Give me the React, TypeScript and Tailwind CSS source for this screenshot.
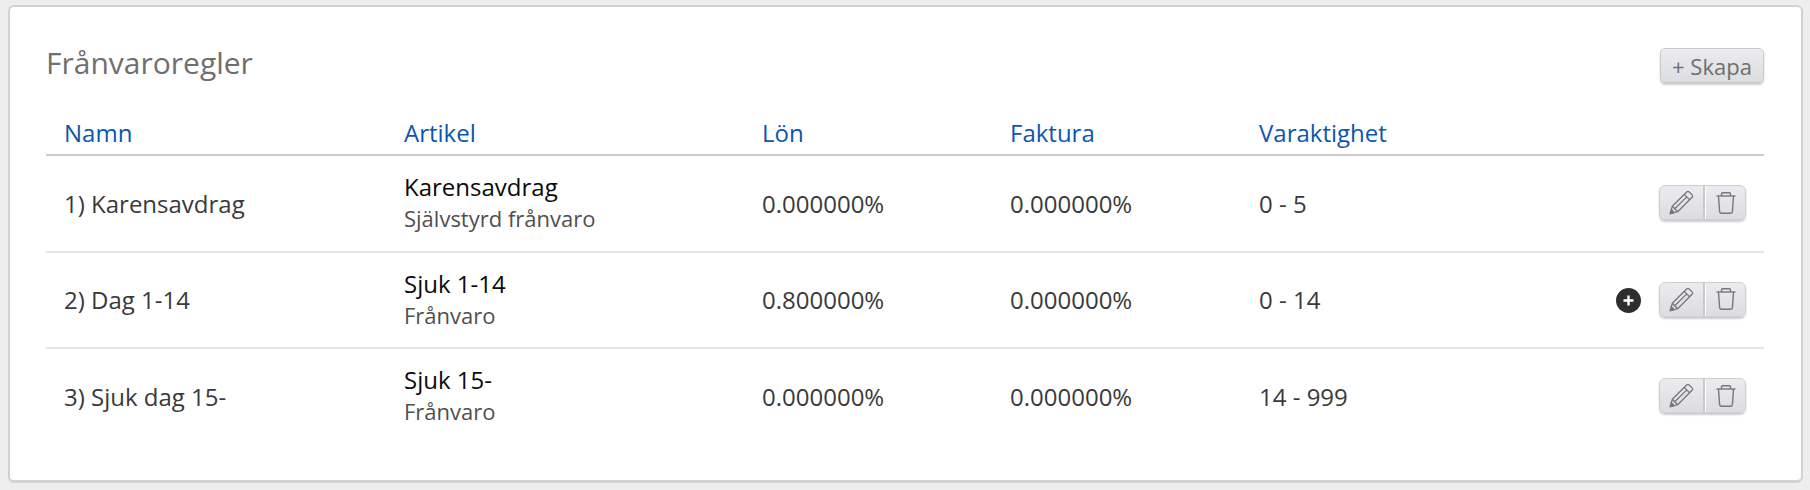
const ROWS = [
  { name: '1) Karensavdrag', article: 'Karensavdrag', sub: 'Självstyrd frånvaro', pay: '0.000000%', invoice: '0.000000%', duration: '0 - 5', h: 'h-[97px]' },
  { name: '2) Dag 1-14', article: 'Sjuk 1-14', sub: 'Frånvaro', pay: '0.800000%', invoice: '0.000000%', duration: '0 - 14', h: 'h-[96px]', add: true },
  { name: '3) Sjuk dag 15-', article: 'Sjuk 15-', sub: 'Frånvaro', pay: '0.000000%', invoice: '0.000000%', duration: '14 - 999', h: 'h-[96px]', last: true },
];

function PencilIcon() {
  return (
    <svg className="w-[27px] h-[27px]" viewBox="0 0 24 24" fill="none" stroke="#777777" strokeWidth="1.15" strokeLinejoin="round">
      <path d="M2 22l1.8-6.6L16.6 2.6a1.6 1.6 0 0 1 2.2 0l2.6 2.6a1.6 1.6 0 0 1 0 2.2L8.6 20.2z" />
      <path d="M3.8 15.4l4.8 4.8M14.4 4.8l4.8 4.8M6 17.6L16.5 7.2" />
      <path d="M2 22l1-3.6 2.6 2.6z" fill="#777777" />
    </svg>
  );
}

function TrashIcon() {
  return (
    <svg className="w-[22px] h-[24px]" viewBox="0 0 22 24" fill="none" stroke="#777777" strokeWidth="1.4" strokeLinejoin="round">
      <path d="M1.5 5h19" />
      <path d="M6.5 5V2.8a1 1 0 0 1 1-1h7a1 1 0 0 1 1 1V5" />
      <path d="M3.5 5l1.1 15.6a2 2 0 0 0 2 1.700h8.8a2 2 0 0 0 2-1.700L18.500 5" />
    </svg>
  );
}

function RowActions() {
  return (
    <div className="flex h-[35px] rounded-[6px] border border-[#cfcfcf] bg-gradient-to-b from-[#ececf0] to-[#dcdde1] shadow-[0_2px_2px_rgba(0,0,0,0.2)]">
      <button className="w-[45px] flex items-center justify-center border-r-2 border-[#c9c9c9]">
        <PencilIcon />
      </button>
      <button className="w-[40px] flex items-center justify-center border-l border-white">
        <TrashIcon />
      </button>
    </div>
  );
}

export default function App() {
  return (
    <div className="w-[1810px] h-[490px] bg-[#eeeeee] pt-[5px] pl-[8px] pr-[7px] font-['Open_Sans',sans-serif]">
      <div className="h-[478px] bg-white rounded-[6px] border-x-2 border-t-2 border-b-[3px] border-[#d2d2d2] pt-[27px] px-[36px]">
        <div className="flex items-start justify-between">
          <h1 className="mt-[8px] text-[30px] leading-[41px] text-[#6f6f6f] font-normal">Frånvaroregler</h1>
          <button className="mt-[14px] mr-[1px] h-[35px] w-[104px] rounded-[5px] border border-[#c9c9c9] bg-gradient-to-b from-[#ececf0] to-[#dcdde1] text-[22px] leading-none text-[#6f6f6f] shadow-[0_2px_2px_rgba(0,0,0,0.2)]">
            + Skapa
          </button>
        </div>
        <table className="w-[1718px] table-fixed mt-[28px]">
          <thead>
            <tr className="border-b-2 border-[#cbcbcb] h-[44px] text-left text-[24px] text-[#0b57ad]">
              <th className="w-[358px] pl-[18px] font-normal">Namn</th>
              <th className="w-[358px] font-normal">Artikel</th>
              <th className="w-[248px] font-normal">Lön</th>
              <th className="w-[249px] font-normal">Faktura</th>
              <th className="font-normal">Varaktighet</th>
              <th className="w-[150px]" />
            </tr>
          </thead>
          <tbody className="text-[24px] text-[#3a3a3a]">
            {ROWS.map((r) => (
              <tr key={r.name} className={`${r.h} ${r.last ? '' : 'border-b-2 border-[#e5e5e5]'}`}>
                <td className="pl-[18px]">{r.name}</td>
                <td>
                  <div className="pb-[1px] text-[24px] leading-[33px] text-[#0a0a0a]">{r.article}</div>
                  <div className="pb-[5px] text-[22px] leading-[28px] text-[#505050]">{r.sub}</div>
                </td>
                <td>{r.pay}</td>
                <td>{r.invoice}</td>
                <td>{r.duration}</td>
                <td className="pr-[18px] pb-[2px]">
                  <div className="flex items-center justify-end gap-[18px]">
                    {r.add && (
                      <span className="mt-[2px] w-[25px] h-[25px] rounded-full bg-[#2e2e2e] flex items-center justify-center">
                        <svg className="w-[11px] h-[11px]" viewBox="0 0 11 11" stroke="#fff" strokeWidth="2.4"><path d="M5.5 0.5v10M0.5 5.5h10" /></svg>
                      </span>
                    )}
                    <RowActions />
                  </div>
                </td>
              </tr>
            ))}
          </tbody>
        </table>
      </div>
    </div>
  );
}
